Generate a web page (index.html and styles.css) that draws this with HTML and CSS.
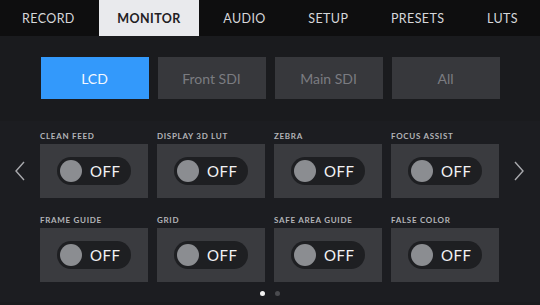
FILE: index.html
```html
<!DOCTYPE html>
<html>
<head>
    <title>Monitor Settings</title>
    <link rel="stylesheet" href="styles.css">
</head>
<body>
    <div class="screen">
        <div class="tabs">
            <div class="tab">RECORD</div>
            <div class="tab active">MONITOR</div>
            <div class="tab">AUDIO</div>
            <div class="tab">SETUP</div>
            <div class="tab">PRESETS</div>
            <div class="tab">LUTS</div>
        </div>

        <div class="outputs">
            <div class="output selected">LCD</div>
            <div class="output">Front SDI</div>
            <div class="output">Main SDI</div>
            <div class="output">All</div>
        </div>

        <div class="panel">
            <div class="pager">
                <div class="arrow">
                    <svg width="10" height="20" viewBox="0 0 10 20"><polyline points="9,1 1,10 9,19" fill="none" stroke="#a9aaae" stroke-width="1.4"/></svg>
                </div>
                <div class="settings">
                    <div class="setting">
                        <div class="label">CLEAN FEED</div>
                        <div class="card"><div class="toggle"><span class="knob"></span>OFF</div></div>
                    </div>
                    <div class="setting">
                        <div class="label">DISPLAY 3D LUT</div>
                        <div class="card"><div class="toggle"><span class="knob"></span>OFF</div></div>
                    </div>
                    <div class="setting">
                        <div class="label">ZEBRA</div>
                        <div class="card"><div class="toggle"><span class="knob"></span>OFF</div></div>
                    </div>
                    <div class="setting">
                        <div class="label">FOCUS ASSIST</div>
                        <div class="card"><div class="toggle"><span class="knob"></span>OFF</div></div>
                    </div>
                    <div class="setting">
                        <div class="label">FRAME GUIDE</div>
                        <div class="card"><div class="toggle"><span class="knob"></span>OFF</div></div>
                    </div>
                    <div class="setting">
                        <div class="label">GRID</div>
                        <div class="card"><div class="toggle"><span class="knob"></span>OFF</div></div>
                    </div>
                    <div class="setting">
                        <div class="label">SAFE AREA GUIDE</div>
                        <div class="card"><div class="toggle"><span class="knob"></span>OFF</div></div>
                    </div>
                    <div class="setting">
                        <div class="label">FALSE COLOR</div>
                        <div class="card"><div class="toggle"><span class="knob"></span>OFF</div></div>
                    </div>
                </div>
                <div class="arrow">
                    <svg width="10" height="20" viewBox="0 0 10 20"><polyline points="1,1 9,10 1,19" fill="none" stroke="#a9aaae" stroke-width="1.4"/></svg>
                </div>
            </div>
            <div class="dots">
                <span class="dot on"></span>
                <span class="dot"></span>
            </div>
        </div>
    </div>
</body>
</html>
```

FILE: styles.css
```css
body { margin: 0; background: #1a1b1e; font-family: Lato, "Open Sans", sans-serif; }
.screen { width: 540px; height: 305px; overflow: hidden; background: #1a1b1e; }

.tabs { display: flex; justify-content: space-between; height: 36px; padding: 0 4px; background: #0e0e0f; }
.tab { display: flex; align-items: center; padding: 0 18px; font-size: 12.5px; letter-spacing: 0.4px; color: #d6d7da; }
.tab.active { background: #e9eaed; color: #1f2023; font-weight: 700; }

.outputs { display: grid; grid-template-columns: repeat(4, 108px); gap: 9px; justify-content: center; height: 85px; padding-top: 21px; box-sizing: border-box; }
.output { height: 42px; display: flex; align-items: center; justify-content: center; background: #37383c; color: #7b7c81; font-size: 14px; }
.output.selected { background: #3399fb; color: #f4f8ff; }

.panel { background: #1c1d21; padding-top: 9px; height: 181px; box-sizing: border-box; }
.pager { display: flex; }
.arrow { width: 40px; display: flex; justify-content: center; align-items: flex-start; padding-top: 31px; }
.settings { display: grid; grid-template-columns: repeat(4, 108px); column-gap: 9px; row-gap: 16px; }
.label { height: 12px; line-height: 12px; margin-bottom: 2px; font-size: 8px; font-weight: 700; letter-spacing: 0.7px; color: #b3b4b8; }
.card { height: 54px; background: #3a3b3f; display: flex; align-items: center; justify-content: center; }
.toggle { width: 74px; height: 28px; box-sizing: border-box; padding-left: 3px; border-radius: 14px; background: #1e1f22; display: flex; align-items: center; gap: 8px; color: #f2f2f4; font-size: 15px; letter-spacing: 0.5px; }
.knob { width: 22px; height: 22px; border-radius: 50%; background: #8b8d91; }

.dots { display: flex; justify-content: center; gap: 10px; margin-top: 9px; }
.dot { width: 5px; height: 5px; border-radius: 50%; background: #4a4b4f; }
.dot.on { background: #f2f2f2; }
```
